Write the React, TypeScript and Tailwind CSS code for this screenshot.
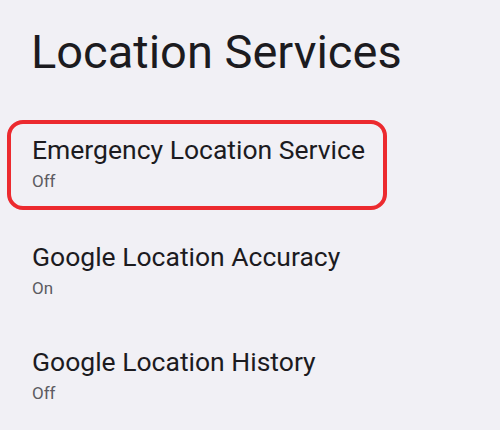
import React from 'react';

const items = [
    { title: 'Emergency Location Service', status: 'Off', highlighted: true },
    { title: 'Google Location Accuracy', status: 'On', highlighted: false },
    { title: 'Google Location History', status: 'Off', highlighted: false },
];

const App: React.FC = () => {
    return (
        <div className="w-[500px] h-[430px] overflow-hidden bg-[#f1f0f5] font-['Roboto',sans-serif]">
            <h1 className="pl-[31px] pt-[22px] text-[47px] leading-[60px] font-normal text-[#1c1b1f]">Location Services</h1>
            <div className="mt-[38px] flex flex-col">
                {items.map(item => (
                    <div
                        key={item.title}
                        className={
                            item.highlighted
                                ? 'ml-[7px] w-[380px] h-[90px] mb-[15px] rounded-[16px] border-[4px] border-[#ec2a2f] pl-[21px] pt-[10px]'
                                : 'h-[105px] pl-[32px] pt-[16px]'
                        }
                    >
                        <p className="text-[26.5px] leading-[32px] text-[#1c1b1f]">{item.title}</p>
                        <p className="mt-[3px] text-[17px] leading-[24px] text-[#5c5b61]">{item.status}</p>
                    </div>
                ))}
            </div>
        </div>
    );
};

export default App;
